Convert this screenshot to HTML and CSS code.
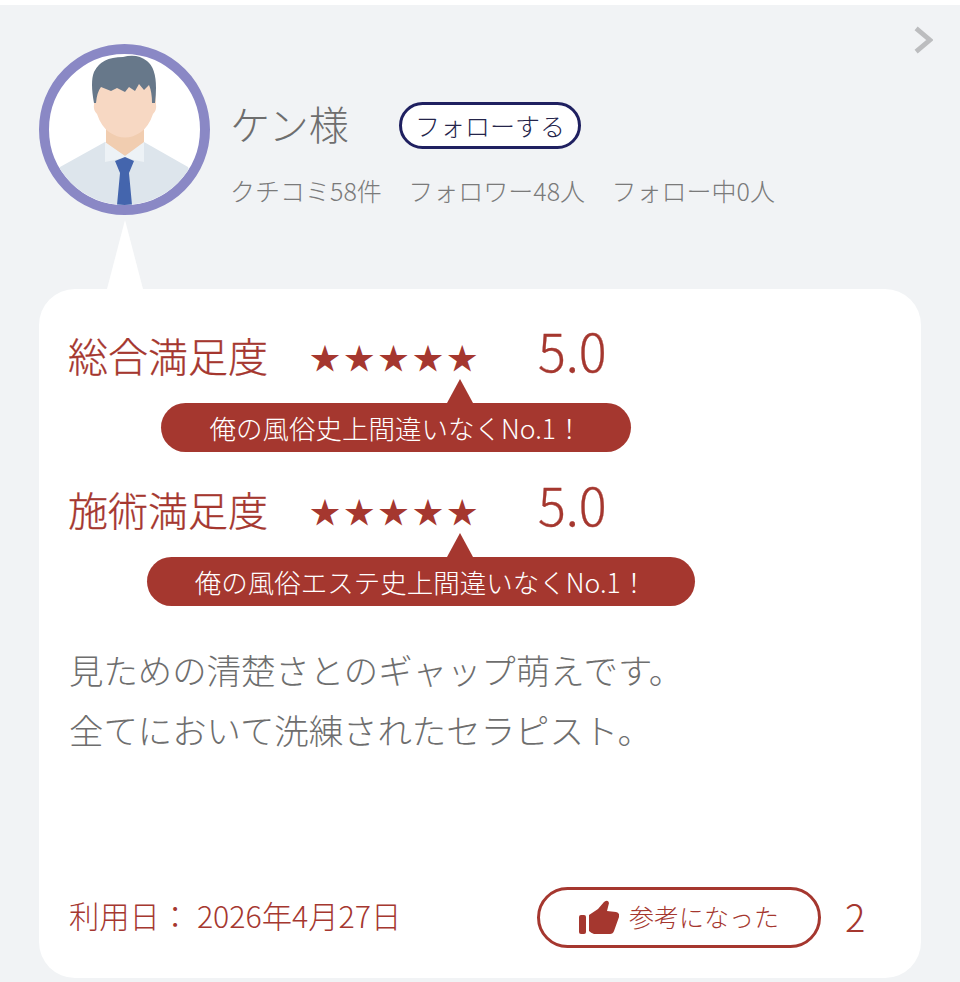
FILE: index.html
```html
<!DOCTYPE html>
<html lang="ja">
<head>
    <meta charset="utf-8">
    <title>クチコミ</title>
    <link rel="stylesheet" href="styles.css">
</head>
<body>

<div class="review">
    <svg class="next" viewBox="0 0 18 26"><path d="M2 2 L15 13 L2 24" fill="none" stroke="#bcbdbf" stroke-width="4.5"/></svg>

    <div class="user">
        <div class="avatar">
            <svg viewBox="0 0 151 151">
                <defs><clipPath id="round"><circle cx="75.5" cy="75.5" r="75.5"/></clipPath></defs>
                <g clip-path="url(#round)">
                    <!-- shirt -->
                    <path d="M11 113 L56 88 L95 88 L139 113 L151 151 L0 151 Z" fill="#dde5ec"/>
                    <!-- neck -->
                    <path d="M57 66 L95 66 L95 90 L76 102 L57 90 Z" fill="#f1cdb0"/>
                    <!-- face -->
                    <path d="M45 30 L106 30 L107 50 Q108 56 104 60 Q100 72 92 78 Q76 89 60 78 Q52 72 48 60 Q44 56 45 50 Z" fill="#f7d8c3"/>
                    <!-- collar -->
                    <path d="M56 88 L76 102 L95 88 L95 108 L85 106 L76 103 L66 106 L56 108 Z" fill="#edf2f6"/>
                    <!-- tie -->
                    <path d="M66 107 L76 103 L85 107 L80 119 L83 151 L68 151 L71 119 Z" fill="#4465ad"/>
                    <!-- hair -->
                    <path d="M45 49 Q41 28 45 18 Q52 3 74 3 Q88 -1 98 7 Q110 16 106 49 L103 49 Q103 38 100 31 L95 36 L90 30 L86 37 L80 33 L76 38 L68 34 L62 37 L52 33 Q48 38 47 49 Z" fill="#67788a"/>
                </g>
            </svg>
        </div>
        <div class="user-info">
            <div class="name-row">
                <span class="name">ケン様</span>
                <span class="follow">フォローする</span>
            </div>
            <div class="stats">
                <span>クチコミ58件</span>
                <span>フォロワー48人</span>
                <span>フォロー中0人</span>
            </div>
        </div>
    </div>

    <div class="card">
        <div class="score">
            <span class="score-title">総合満足度</span>
            <span class="stars">★★★★★</span>
            <span class="score-num">5.0</span>
        </div>
        <div class="bubble bubble-a">俺の風俗史上間違いなくNo.1！</div>

        <div class="score">
            <span class="score-title">施術満足度</span>
            <span class="stars">★★★★★</span>
            <span class="score-num">5.0</span>
        </div>
        <div class="bubble bubble-b">俺の風俗エステ史上間違いなくNo.1！</div>

        <p class="comment">見ための清楚さとのギャップ萌えです。<br>全てにおいて洗練されたセラピスト。</p>

        <div class="card-foot">
            <span class="date">利用日： 2026年4月27日</span>
            <span class="helpful">
                <svg class="thumb" viewBox="0 0 40 36">
                    <rect x="0" y="15" width="7" height="19" rx="2"/>
                    <path d="M10 15 L19 9 L25 2 Q29 -1 30 3 L28 11 L37 12 Q41 13 40 17 L35 31 Q34 34 31 34 L15 34 Q12 33 10 31 Z"/>
                </svg>
                <span class="helpful-label">参考になった</span>
            </span>
            <span class="helpful-count">2</span>
        </div>
    </div>
</div>

</body>
</html>
```

FILE: styles.css
```css
* {
    box-sizing: border-box;
}
body {
    margin: 0;
    padding-top: 5px;
    background-color: #fff;
    font-family: "Noto Sans CJK JP", "Noto Sans", sans-serif;
    font-weight: 300;
}
.review {
    position: relative;
    height: 977px;
    padding: 39px 39px 0;
    background-color: #f1f3f5;
    overflow: hidden;
}
.next {
    position: absolute;
    top: 21px;
    right: 27px;
    width: 19px;
    height: 28px;
}
.user {
    display: flex;
    align-items: flex-start;
}
.avatar {
    position: relative;
    width: 171px;
    height: 171px;
    flex: none;
    border: 10px solid #8a88c5;
    border-radius: 50%;
    background-color: #fff;
}
.avatar svg {
    display: block;
    width: 151px;
    height: 151px;
}
/* white pointer from the avatar down to the card */
.avatar::after {
    content: "";
    position: absolute;
    left: 58px;
    top: 166px;
    border-left: 18px solid transparent;
    border-right: 18px solid transparent;
    border-bottom: 69px solid #fff;
}
.user-info {
    margin-left: 20px;
    padding-top: 57px;
}
.name-row {
    display: flex;
    align-items: center;
    height: 48px;
}
.name {
    width: 169px;
    margin-bottom: 4px;
    font-size: 40px;
    color: #6e6e6e;
}
.follow {
    width: 182px;
    height: 47px;
    display: flex;
    align-items: center;
    justify-content: center;
    border: 3px solid #1f2060;
    border-radius: 24px;
    background-color: #fff;
    font-size: 25px;
    color: #24244a;
}
.stats {
    display: flex;
    gap: 26.5px;
    margin-top: 23px;
    font-size: 25px;
    line-height: 36px;
    color: #7a7a7a;
}
.card {
    height: 689px;
    margin-top: 74px;
    padding: 38px 30px 0;
    background-color: #fff;
    border-radius: 36px;
}
.score {
    display: flex;
    align-items: center;
    height: 56px;
    color: #a5372f;
}
.score-title {
    width: 242px;
    margin-left: -1px;
    font-size: 40px;
    -webkit-text-stroke: 0.3px #a5372f;
}
.stars {
    width: 228px;
    margin-top: 2px;
    font-size: 30px;
    letter-spacing: 4.3px;
    font-weight: 400;
}
.score-num {
    margin-bottom: 10px;
    font-size: 52px;
    line-height: 56px;
    -webkit-text-stroke: 0.3px #a5372f;
}
.bubble {
    position: relative;
    height: 49px;
    margin-top: 20px;
    margin-bottom: 29px;
    border-radius: 25px;
    background-color: #a5372f;
    color: #fff;
    font-size: 26.5px;
    line-height: 49px;
    text-align: center;
}
.bubble::before {
    content: "";
    position: absolute;
    top: -24px;
    border-left: 13px solid transparent;
    border-right: 13px solid transparent;
    border-bottom: 24px solid #a5372f;
}
.bubble-a {
    width: 470px;
    margin-left: 92px;
}
.bubble-a::before {
    left: 286px;
}
.bubble-b {
    width: 548px;
    margin-left: 78px;
}
.bubble-b::before {
    left: 300px;
}
.comment {
    margin: 0;
    padding-top: 4px;
    font-size: 34.4px;
    line-height: 60px;
    color: #6e6e6e;
}
.card-foot {
    display: flex;
    align-items: center;
    margin-top: 128px;
    color: #a5372f;
}
.date {
    width: 468px;
    margin-bottom: 6px;
    font-size: 30.3px;
}
.helpful {
    width: 284px;
    height: 61px;
    display: flex;
    align-items: center;
    justify-content: center;
    gap: 10px;
    border: 3px solid #a5372f;
    border-radius: 31px;
}
.helpful-label {
    margin-bottom: 4px;
    font-size: 25px;
}
.thumb {
    width: 40px;
    height: 36px;
    fill: #a5372f;
}
.helpful-count {
    margin-left: 24px;
    margin-bottom: 4px;
    font-size: 38px;
}
```
